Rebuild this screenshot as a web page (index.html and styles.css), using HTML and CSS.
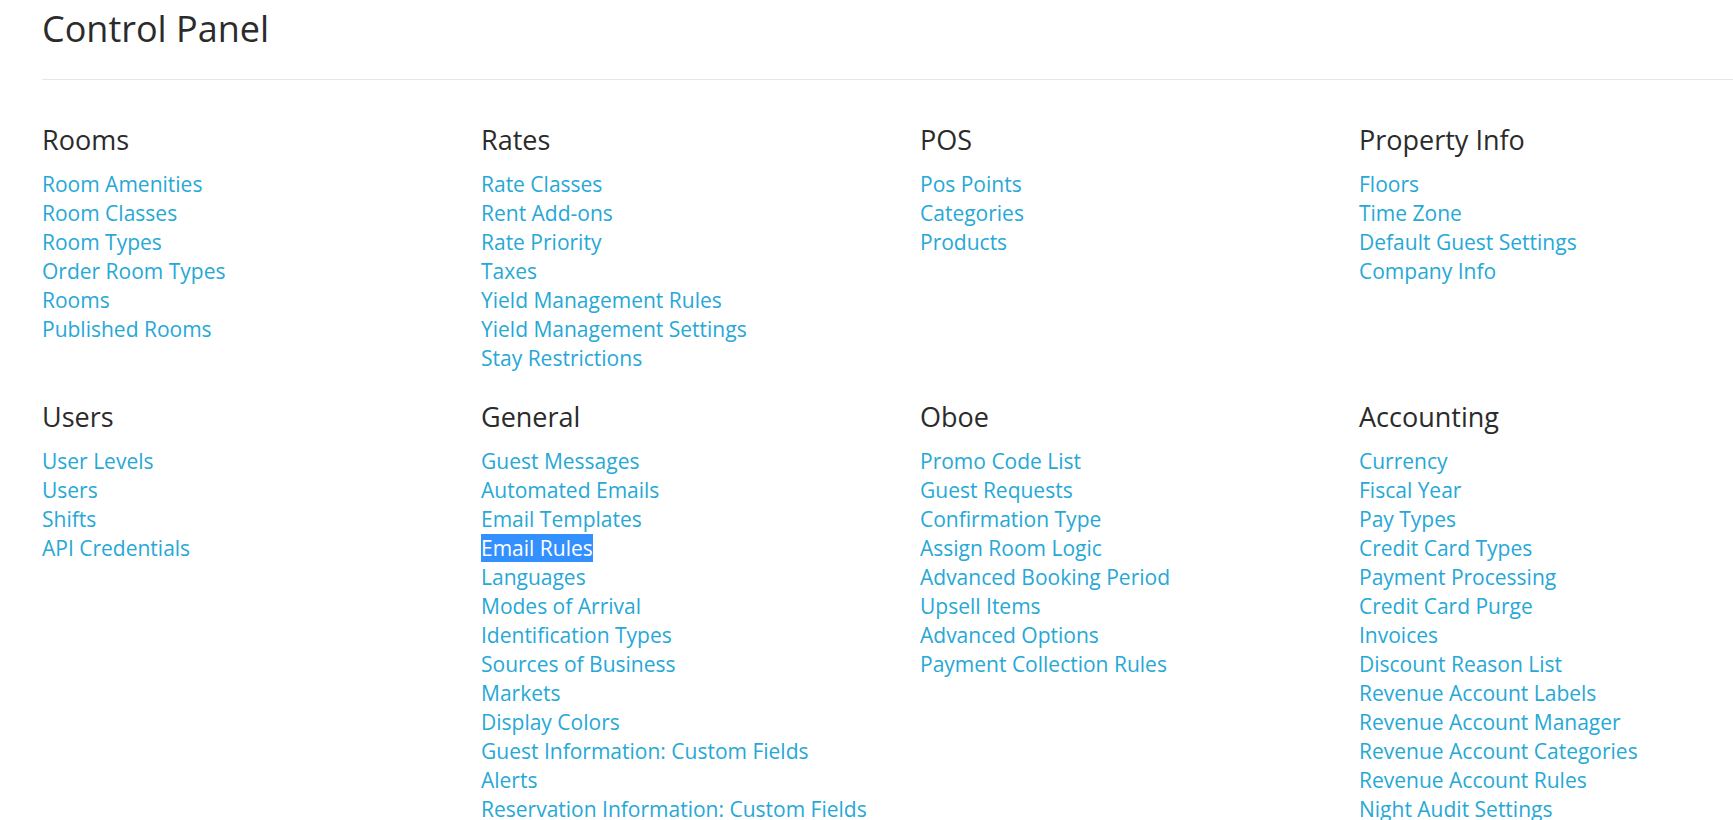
FILE: index.html
```html
<!DOCTYPE html>
<html lang="en">
<head>
<meta charset="utf-8">
<title>Control Panel</title>
<link rel="stylesheet" href="styles.css">
</head>
<body>
<div class="page">
  <h1 class="page-title">Control Panel</h1>
  <hr class="divider">
  <div class="grid">
    <section class="group">
      <h3 class="group-title">Rooms</h3>
      <ul class="links">
        <li><a href="#">Room Amenities</a></li>
        <li><a href="#">Room Classes</a></li>
        <li><a href="#">Room Types</a></li>
        <li><a href="#">Order Room Types</a></li>
        <li><a href="#">Rooms</a></li>
        <li><a href="#">Published Rooms</a></li>
      </ul>
    </section>
    <section class="group">
      <h3 class="group-title">Rates</h3>
      <ul class="links">
        <li><a href="#">Rate Classes</a></li>
        <li><a href="#">Rent Add-ons</a></li>
        <li><a href="#">Rate Priority</a></li>
        <li><a href="#">Taxes</a></li>
        <li><a href="#">Yield Management Rules</a></li>
        <li><a href="#">Yield Management Settings</a></li>
        <li><a href="#">Stay Restrictions</a></li>
      </ul>
    </section>
    <section class="group">
      <h3 class="group-title">POS</h3>
      <ul class="links">
        <li><a href="#">Pos Points</a></li>
        <li><a href="#">Categories</a></li>
        <li><a href="#">Products</a></li>
      </ul>
    </section>
    <section class="group">
      <h3 class="group-title">Property Info</h3>
      <ul class="links">
        <li><a href="#">Floors</a></li>
        <li><a href="#">Time Zone</a></li>
        <li><a href="#">Default Guest Settings</a></li>
        <li><a href="#">Company Info</a></li>
      </ul>
    </section>
    <section class="group">
      <h3 class="group-title">Users</h3>
      <ul class="links">
        <li><a href="#">User Levels</a></li>
        <li><a href="#">Users</a></li>
        <li><a href="#">Shifts</a></li>
        <li><a href="#">API Credentials</a></li>
      </ul>
    </section>
    <section class="group">
      <h3 class="group-title">General</h3>
      <ul class="links">
        <li><a href="#">Guest Messages</a></li>
        <li><a href="#">Automated Emails</a></li>
        <li><a href="#">Email Templates</a></li>
        <li><a href="#" class="selected">Email Rules</a></li>
        <li><a href="#">Languages</a></li>
        <li><a href="#">Modes of Arrival</a></li>
        <li><a href="#">Identification Types</a></li>
        <li><a href="#">Sources of Business</a></li>
        <li><a href="#">Markets</a></li>
        <li><a href="#">Display Colors</a></li>
        <li><a href="#">Guest Information: Custom Fields</a></li>
        <li><a href="#">Alerts</a></li>
        <li><a href="#">Reservation Information: Custom Fields</a></li>
      </ul>
    </section>
    <section class="group">
      <h3 class="group-title">Oboe</h3>
      <ul class="links">
        <li><a href="#">Promo Code List</a></li>
        <li><a href="#">Guest Requests</a></li>
        <li><a href="#">Confirmation Type</a></li>
        <li><a href="#">Assign Room Logic</a></li>
        <li><a href="#">Advanced Booking Period</a></li>
        <li><a href="#">Upsell Items</a></li>
        <li><a href="#">Advanced Options</a></li>
        <li><a href="#">Payment Collection Rules</a></li>
      </ul>
    </section>
    <section class="group">
      <h3 class="group-title">Accounting</h3>
      <ul class="links">
        <li><a href="#">Currency</a></li>
        <li><a href="#">Fiscal Year</a></li>
        <li><a href="#">Pay Types</a></li>
        <li><a href="#">Credit Card Types</a></li>
        <li><a href="#">Payment Processing</a></li>
        <li><a href="#">Credit Card Purge</a></li>
        <li><a href="#">Invoices</a></li>
        <li><a href="#">Discount Reason List</a></li>
        <li><a href="#">Revenue Account Labels</a></li>
        <li><a href="#">Revenue Account Manager</a></li>
        <li><a href="#">Revenue Account Categories</a></li>
        <li><a href="#">Revenue Account Rules</a></li>
        <li><a href="#">Night Audit Settings</a></li>
      </ul>
    </section>
  </div>
</div>
</body>
</html>
```
FILE: styles.css
```css
html, body {
  margin: 0;
  padding: 0;
  background: #fff;
  overflow: hidden;
}

body {
  font-family: "Open Sans", "Noto Sans", sans-serif;
  color: #333;
}

.page {
  padding: 9px 0 0 42px;
}

.page-title {
  margin: 0;
  font-size: 36px;
  line-height: 40px;
  font-weight: 400;
  color: #2b2b2b;
}

.divider {
  margin: 30px 0 0;
  border: 0;
  border-top: 1px solid #e6e6e6;
  height: 0;
}

.grid {
  display: grid;
  grid-template-columns: 439px 439px 439px 1fr;
  row-gap: 29px;
  margin-top: 45px;
}

.group-title {
  margin: 0 0 15px;
  font-size: 27px;
  line-height: 30px;
  font-weight: 400;
  color: #2b2b2b;
}

.links {
  list-style: none;
  margin: 0;
  padding: 0;
}

.links li {
  font-size: 21px;
  line-height: 29px;
  white-space: nowrap;
}

.links a {
  color: #27a8d6;
  text-decoration: none;
}

.links a.selected {
  background: #3390ff;
  color: #fff;
}
```
